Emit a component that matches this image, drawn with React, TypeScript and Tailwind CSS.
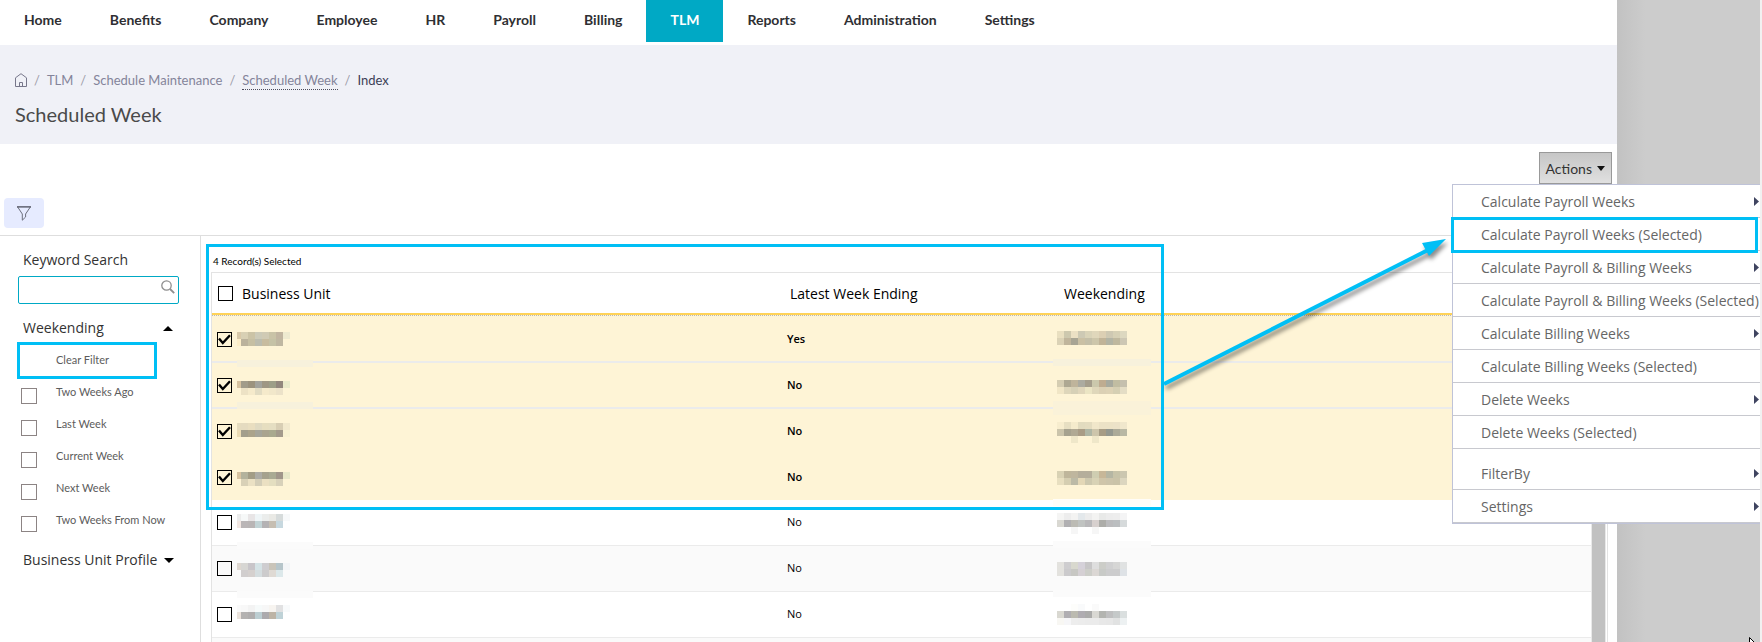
import { useState } from "react";

const navItems = [
  "Home", "Benefits", "Company", "Employee", "HR", "Payroll",
  "Billing", "TLM", "Reports", "Administration", "Settings",
];

const weekFilters = ["Two Weeks Ago", "Last Week", "Current Week", "Next Week", "Two Weeks From Now"];

const menuItems = [
  { label: "Calculate Payroll Weeks", sub: true },
  { label: "Calculate Payroll Weeks (Selected)", marked: true },
  { label: "Calculate Payroll & Billing Weeks", sub: true },
  { label: "Calculate Payroll & Billing Weeks (Selected)" },
  { label: "Calculate Billing Weeks", sub: true },
  { label: "Calculate Billing Weeks (Selected)" },
  { label: "Delete Weeks", sub: true },
  { label: "Delete Weeks (Selected)" },
  { label: "FilterBy", sub: true, spaced: true },
  { label: "Settings", sub: true },
];

type Mosaic = { top: number; lines: string[]; band?: [number, number, string] };
type Row = { latest: string; selected?: boolean; line: string; unit: Mosaic; week: Mosaic };

const rows: Row[] = [
  {
    latest: "Yes", selected: true, line: "border-b-2 border-[#ebebeb] bg-[#fef4d6]",
    unit: { top: 15, lines: ["d9c9a9 d8d0b4 cbc3a6 cccab8 d0cab4 c9c3a7 c1b5a1 eeead0", "fdeec8 bbb29c c6bfa3 bcbcae c8bc9f c5c2a6 bfb7a1 -"], band: [43, 7, "#f7f1dc"] },
    week: { top: 14, lines: ["e9dfc0 cdc8ae ebe0c4 cdc9b4 d9d3b8 e0d7bb dccfb3 cec8b2 d6d0b5 ddd8c0", "dbd2b6 c0b59c a8a594 cac0a4 c4bfa8 cdc6aa c1b498 b3b4a4 bfb89e cdc7b4"], band: [42, 7, "#f7f1dc"] },
  },
  {
    latest: "No", selected: true, line: "border-b-2 border-[#ebebeb] bg-[#fef4d6]",
    unit: { top: 18, lines: ["d8c3a0 a29c8a 9c937e a3a39c 9f9784 9d9e87 92877d eaeaca", "- ede2c5 f5eacb e2dcc3 f5eacb f1e7ca ece2c9 -"], band: [39, 7, "#f7f1dc"] },
    week: { top: 17, lines: ["d5cdb2 aea892 bfb49b acaba0 a59e8c cbc8ac bfac90 a8aa9e c1bda2 c5c0ae", "f1e6c6 ded6ba d6d0b6 e0d6bb ebe5c4 dfd7ba dbd0b4 ddd2b5 d5cfb3 e4ddc5"], band: [38, 14, "#faf2d9"] },
  },
  {
    latest: "No", selected: true, line: "border-b-2 border-[#fef4d6] bg-[#fef4d6]",
    unit: { top: 14, lines: ["e6dcbf e5dbc0 e9dec0 e0dac2 e6dec0 e5dec2 d8ceb4 f2e9cd", "ecdcb5 a39e8c aba38b a6a59a aaa48f a9a98f a39a8c f8f1d2"] },
    week: { top: 13, lines: ["f7edce e7dfc2 f5ebcc e2dbbf e4dcc0 f1e7ca ece2c6 ece2c6 ece2c8 f0e7cc", "cbc4ab a6a28f b0a994 a99c86 afb6a5 cdc5ab a79c85 95988f acaa98 b9b8a4", "- - efe7c9 - - efe7c9 - - - -"] },
  },
  {
    latest: "No", selected: true, line: "border-b border-[#fef4d6] bg-[#fef4d6]",
    unit: { top: 17, lines: ["d8c3a0 b3b29c a39d86 adaca5 a6a28d a9aa93 a0968a e8e8c8", "- d9d1b7 ebe1c4 d4ceb8 ebe0c2 e4dec0 d8d1ba -"] },
    week: { top: 16, lines: ["d9d2b4 bfb69b bfb69e b5ae9b b5ae9b cfcdb1 c7b798 b5b6a3 c7c3a8 ccc7b0", "e8dfc0 d5ceb1 bcbaa6 e3d7b6 cdc8ae d8d2b5 cfc5a9 ccc4aa cac3a8 dcd6bf"], band: [44, 7, "#fffdf8"] },
  },
  {
    latest: "No", line: "border-b border-[#ebebeb] bg-white",
    unit: { top: 14, lines: ["ececec f6f8f8 e8e5e6 eff5f7 ebedec e9e9e5 d6dbdb f7f9fa", "f2e7e2 bab6b7 b9b5b5 c2d3d5 b4b2b4 c6beb2 c7d8df -"], band: [42, 7, "#fbfbfb"] },
    week: { top: 13, lines: ["f5f5f4 ededed f3f3f2 e3e8eb ececec f3f3f2 e8e9e8 ececec ededed f4f4f5", "d9d8d2 b1b0b2 bcbbb4 c0c3c1 b9b8ba d7d0ce adada9 bbbbbd bbbec0 d6dadb", "- - f6f6f6 - - f6f6f6 - - - -"], band: [41, 7, "#fbfbfb"] },
  },
  {
    latest: "No", line: "border-b border-[#ebebeb] bg-[#fafafa]",
    unit: { top: 17, lines: ["ded7d0 d7d6d3 c8c5c9 d5e3e6 cecdd0 c9c4b9 b6c5ca f3f5f7", "- d1cece d5d0ce d5dddf cccbcc dfdad4 dce8ea -"], band: [45, 7, "#fbfbfb"] },
    week: { top: 16, lines: ["e3e2de cecdcf d8d8ce d5d1d9 c7c6c7 dedede cccdc8 d0d0d1 d6d6d5 e0e2e2", "e3e2de cbcacc c7c7c3 d5d0d4 cdcec9 dbd7d4 c8cac7 cccccd cccccd dee2e6"], band: [44, 7, "#fbfbfb"] },
  },
  {
    latest: "No", line: "border-b border-[#ebebeb] bg-white",
    unit: { top: 13, lines: ["fafafa f8f8f8 f3f3f3 f6fafa f7f7f7 f7f4f0 e1e1e2 f8fafb", "ebe3dc b4b2b1 b0aeae bcced2 acaaad bdb4a6 bfd2d7 -"] },
    week: { top: 12, lines: ["- - fdfdfb f9fafb - fafafa - - - -", "d9d8d1 b0aeb2 bbbab0 afacb1 ababaa d9d8d3 b3b4b0 bfbfc0 c5c9c9 dadfdf", "f8f7f3 f6f6f8 ededed ececec ebebeb ebebeb e8e8e8 e7e7e7 e1e2e2 edf1f2"] },
  },
  {
    latest: "", line: "border-b border-[#ebebeb] bg-[#fafafa]",
    unit: { top: 16, lines: [] },
    week: { top: 16, lines: [] },
  },
];

function MaskedText({ mosaic, narrowFirst, inset }: { mosaic: Mosaic; narrowFirst?: boolean; inset: number }) {
  const first = narrowFirst ? 4 : 7;
  const width = narrowFirst ? 76 : 98;
  return (
    <svg width={width} height="43" className="shrink-0 self-start overflow-visible" shapeRendering="crispEdges" aria-hidden="true">
      {mosaic.band && <rect x="0" y={mosaic.band[0]} width={width} height={mosaic.band[1]} fill={mosaic.band[2]} />}
      {mosaic.lines.map((line, r) =>
        line.split(" ").map((c, i) =>
          c === "-" ? null : (
            <rect
              key={`${r}-${i}`}
              x={inset + (i === 0 ? 0 : first + (i - 1) * 7)}
              y={mosaic.top + r * 7}
              width={i === 0 ? first : 7}
              height="7"
              fill={`#${c}`}
            />
          ),
        ),
      )}
    </svg>
  );
}

function RowCheck({ label, defaultChecked }: { label: string; defaultChecked?: boolean }) {
  return (
    <span className="relative flex size-[15px] shrink-0">
      <input
        type="checkbox"
        aria-label={label}
        defaultChecked={defaultChecked}
        className="peer size-[15px] appearance-none border border-black bg-transparent"
      />
      <svg viewBox="0 0 15 15" className="pointer-events-none absolute inset-0 hidden peer-checked:block" aria-hidden="true">
        <path d="M2 6.5 L5.8 11 L13 3.2" fill="none" stroke="#000" strokeWidth="2.4" />
      </svg>
    </span>
  );
}

function Slash() {
  return <span className="text-[#9c9ca8]">/</span>;
}

export default function App() {
  const [keyword, setKeyword] = useState("");
  return (
    <div className="relative flex h-screen overflow-hidden bg-[#cccccc] font-['Lato',sans-serif]">
      <div className="flex min-w-0 flex-1 flex-col bg-white">
        <nav className="flex h-[45px] shrink-0 items-start text-[14px] font-bold text-[#2f2f33]">
          {navItems.map((item) => (
            <a
              key={item}
              href="#"
              className={
                item === "TLM"
                  ? "flex h-[42px] items-center bg-[#00a9c5] px-6 pb-[3px] text-white"
                  : "flex h-[42px] items-center px-6 pb-[3px]"
              }
            >
              {item}
            </a>
          ))}
        </nav>

        <header className="h-[99px] shrink-0 bg-[#f0f1f7] pl-[15px] pt-[25px]">
          <div className="flex h-5 items-center gap-[7px] text-[13px] leading-5 text-[#84849a]">
            <a href="#" aria-label="Home">
              <svg width="12" height="14" viewBox="0 0 12 14" fill="none" stroke="#77778a" aria-hidden="true">
                <path d="M.5 4.8 6 .7l5.5 4.1v8.7H.5z" />
                <path d="M4.5 13.5V9.500h3v4" />
              </svg>
            </a>
            <Slash />
            <a href="#">TLM</a>
            <Slash />
            <a href="#">Schedule Maintenance</a>
            <Slash />
            <a href="#" className="border-b border-dotted border-[#4c4c5c] leading-[18px]">Scheduled Week</a>
            <Slash />
            <span className="text-[#3c4056]">Index</span>
          </div>
          <h1 className="pt-[12px] text-[20px] leading-6 text-[#4a4a4a]">Scheduled Week</h1>
        </header>

        <div className="flex h-[92px] shrink-0 items-start justify-between border-b border-[#dedede] pl-1 pr-[5px]">
          <button type="button" aria-label="Filter" className="mt-[54px] flex h-[30px] w-10 items-center justify-center rounded bg-[#e6ebff]">
            <svg width="14" height="15" viewBox="0 0 14 15" fill="none" stroke="#6b6e7c" aria-hidden="true">
              <path d="M.8 1.200 5.300 8v6.200L8.600 11V8L13.200 1.200" />
              <path d="M0 .9h14" stroke="#3e404c" strokeWidth="1.200" />
            </svg>
          </button>
          <div className="relative pt-2">
            <button
              type="button"
              aria-haspopup="menu"
              aria-expanded="true"
              className="flex h-8 items-center gap-[5px] border border-[#999999] bg-linear-to-b from-[#c6c6c6] to-[#e0e0e0] px-[6px] text-[14px] text-[#333333]"
            >
              Actions
              <svg width="8" height="5" viewBox="0 0 8 5" aria-hidden="true">
                <path d="M0 0h8L4 5z" fill="#111" />
              </svg>
            </button>
            <div
              role="menu"
              className="absolute top-full right-[-148px] z-20 w-[308px] border border-r-0 border-[#bfc3d8] bg-white font-['Open_Sans',sans-serif]"
            >
              {menuItems.map((item) => (
                <div key={item.label} className={item.spaced ? "relative border-b border-[#c8c9cf] pt-2" : "relative border-b border-[#c8c9cf]"}>
                  <button
                    type="button"
                    role="menuitem"
                    className="flex h-8 w-full items-center justify-between pl-7 text-[14px] whitespace-nowrap text-[#666666]"
                  >
                    {item.label}
                    {item.sub && (
                      <svg width="6" height="9" viewBox="0 0 6 9" aria-hidden="true">
                        <path d="M0 0 5 4.500 0 9z" fill="#3f4460" />
                      </svg>
                    )}
                  </button>
                  {item.marked && (
                    <div className="pointer-events-none absolute -top-px right-[2px] -bottom-[3px] -left-[2px] border-[3px] border-[#00bff5]" />
                  )}
                </div>
              ))}
            </div>
          </div>
        </div>

        <div className="flex min-h-0 flex-1">
          <aside className="w-[201px] shrink-0 border-r border-[#dedede] px-[18px] pt-[14px] font-['Open_Sans',sans-serif] text-[14px] text-[#333333]">
            <label htmlFor="keyword" className="block pl-[5px] leading-5">Keyword Search</label>
            <div className="relative mt-[6px] w-[161px]">
              <input
                id="keyword"
                value={keyword}
                onChange={(e) => setKeyword(e.target.value)}
                className="h-7 w-full rounded-[2px] border border-[#00a9c5] px-2 pr-6 text-[13px] outline-none"
              />
              <svg width="14" height="14" viewBox="0 0 14 14" fill="none" stroke="#8e8e8e" className="absolute top-1 right-1" aria-hidden="true">
                <circle cx="5.500" cy="5.500" r="4.700" strokeWidth="1.300" />
                <path d="M9 9l4.200 4.200" strokeWidth="1.800" />
              </svg>
            </div>
            <button type="button" className="mt-[14px] flex w-[155px] items-center justify-between pl-[5px] leading-5">
              Weekending
              <svg width="10" height="5" viewBox="0 0 10 5" aria-hidden="true">
                <path d="M0 5h10L5 0z" fill="#000" />
              </svg>
            </button>
            <div className="-ml-px mt-1 flex h-[37px] w-[140px] border-[3px] border-[#00bff5]">
              <button type="button" className="pl-9 font-['Lato',sans-serif] text-[11px] text-[#5c5c5c]">Clear Filter</button>
            </div>
            <div className="mt-1 pl-[3px] font-['Lato',sans-serif] text-[11px] text-[#5c5c5c]">
              {weekFilters.map((name) => (
                <label key={name} className="flex h-8 items-start gap-[19px] whitespace-nowrap leading-[18px]">
                  <input type="checkbox" className="mt-[5px] size-4 shrink-0 appearance-none border border-[#8c8484] bg-white" />
                  {name}
                </label>
              ))}
            </div>
            <button type="button" className="mt-[7px] flex items-center gap-[7px] pl-[5px] whitespace-nowrap leading-5">
              Business Unit Profile
              <svg width="10" height="5" viewBox="0 0 10 5" aria-hidden="true">
                <path d="M0 0h10L5 5z" fill="#000" />
              </svg>
            </button>
          </aside>

          <main className="relative flex min-w-0 flex-1 flex-col pr-[9px] pl-[10px] font-['Open_Sans',sans-serif]">
            <p className="h-9 shrink-0 pt-4 pl-[2px] font-['Lato',sans-serif] text-[10px] leading-[18px] text-black">4 Record(s) Selected</p>
            <div className="flex min-h-0 flex-1 overflow-hidden border border-b-0 border-[#e3e3e3]">
              <div className="min-w-0 flex-1 overflow-hidden">
                <table className="w-full table-fixed border-separate border-spacing-0 text-left text-[11px] text-black">
                  <colgroup>
                    <col className="w-[566px]" />
                    <col className="w-[275px]" />
                    <col />
                  </colgroup>
                  <thead className="text-[14px]">
                    <tr>
                      <th className="h-[42px] border-b-2 border-[#ffd257] p-0 pl-[6px] font-normal">
                        <span className="flex items-center gap-[9px]">
                          <RowCheck label="Select all" />
                          Business Unit
                        </span>
                      </th>
                      <th className="border-b-2 border-[#ffd257] p-0 pl-3 font-normal">Latest Week Ending</th>
                      <th className="border-b-2 border-[#ffd257] p-0 pl-[11px] font-normal">Weekending</th>
                    </tr>
                    <tr className="bg-[#fef4d6]">
                      <td colSpan={3} className="h-[2px] border-t border-dotted border-[#b9b9b9] p-0" />
                    </tr>
                  </thead>
                  <tbody>
                    {rows.map((row, i) => (
                      <tr key={i} className={row.selected ? "font-semibold" : ""}>
                        <td className={`p-0 pl-[5px] ${row.line}`}>
                          <div className={row.selected ? "flex h-11 items-center gap-[5px]" : "flex h-[45px] items-center gap-[5px]"}>
                            <RowCheck label={`Select row ${i + 1}`} defaultChecked={row.selected} />
                            <MaskedText mosaic={row.unit} narrowFirst inset={0} />
                          </div>
                        </td>
                        <td className={`p-0 pl-[9px] ${row.line}`}>{row.latest}</td>
                        <td className={`p-0 align-top ${row.line}`}>
                          <div className="flex">
                            <MaskedText mosaic={row.week} inset={4} />
                          </div>
                        </td>
                      </tr>
                    ))}
                  </tbody>
                </table>
              </div>
              <div className="mr-[1px] w-[15px] shrink-0 border-r border-l border-[#e9e9e9] bg-[#c1c1c1]" />
            </div>
            <div className="pointer-events-none absolute top-2 left-[5px] h-[266px] w-[958px] border-[3px] border-[#00bff5]" />
            <svg
              width="300"
              height="170"
              viewBox="0 0 300 170"
              className="pointer-events-none absolute top-0 left-[961px] z-10 overflow-visible drop-shadow-[2px_4px_2px_rgba(0,0,0,0.45)]"
              aria-hidden="true"
            >
              <path d="M2 148 L266 14" stroke="#00bff5" strokeWidth="4" />
              <path d="M284 3 L260 7 L267 20z" fill="#00bff5" />
            </svg>
          </main>
        </div>
      </div>
      <div className="flex w-[145px] shrink-0 border-r-2 border-[#f1f1f1] bg-linear-to-r from-[#c2c2c2] to-[#cccccc] to-20%" />
      <svg width="8" height="5" viewBox="0 0 8 5" className="absolute right-[5px] bottom-0" aria-hidden="true">
        <path d="M.5 5V.5L5 5" fill="#fff" stroke="#000" />
      </svg>
    </div>
  );
}
